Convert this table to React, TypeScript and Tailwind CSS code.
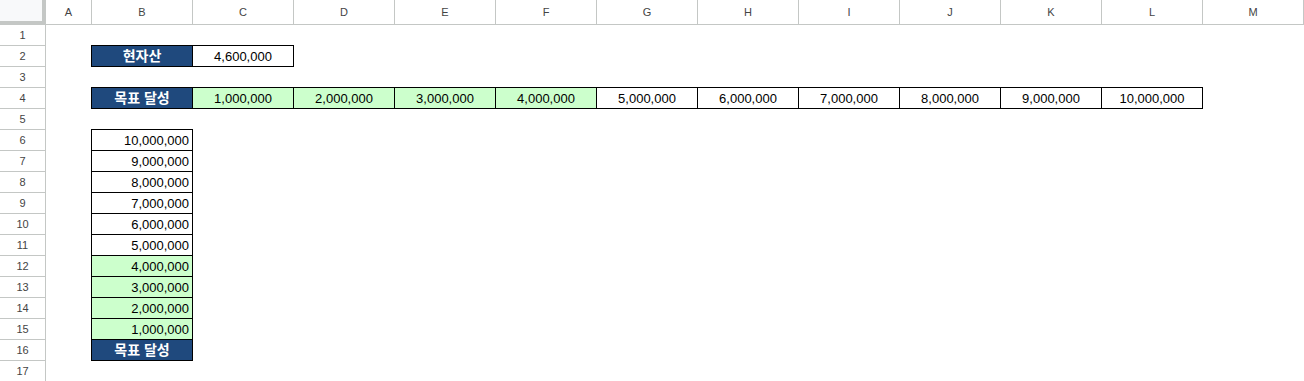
import React from 'react';

type Kind = 'dark' | 'green' | 'white';
type Cell = { text: string; kind: Kind; align: 'center' | 'right' };

const COLS = ['A', 'B', 'C', 'D', 'E', 'F', 'G', 'H', 'I', 'J', 'K', 'L', 'M'];
const ROWS = 17;

const fmt = (n: number) => n.toLocaleString('en-US');

// cell map keyed "row:col" (col 0 = A)
const cells: Record<string, Cell> = {};
const put = (r: number, c: number, cell: Cell) => {
  cells[`${r}:${c}`] = cell;
};

put(2, 1, { text: '현자산', kind: 'dark', align: 'center' });
put(2, 2, { text: '4,600,000', kind: 'white', align: 'center' });

put(4, 1, { text: '목표 달성', kind: 'dark', align: 'center' });
for (let i = 1; i <= 10; i++) {
  put(4, i + 1, { text: fmt(i * 1000000), kind: i <= 4 ? 'green' : 'white', align: 'center' });
}

for (let i = 0; i < 10; i++) {
  const v = 10 - i;
  put(6 + i, 1, { text: fmt(v * 1000000), kind: v <= 4 ? 'green' : 'white', align: 'right' });
}
put(16, 1, { text: '목표 달성', kind: 'dark', align: 'center' });

function DataCell({ r, c }: { r: number; c: number }) {
  const cell = cells[`${r}:${c}`];
  if (!cell) return <div />;
  const hasLeft = !!cells[`${r}:${c - 1}`];
  const hasTop = !!cells[`${r - 1}:${c}`];
  return (
    <div
      className={[
        'flex items-center border-r border-b border-black leading-none',
        hasLeft ? '' : '-ml-px border-l',
        hasTop ? '' : '-mt-px border-t',
        cell.align === 'right' ? 'justify-end pr-[3px]' : 'justify-center',
        cell.kind === 'dark'
          ? 'bg-[#1f497d] text-white font-bold text-[14px]'
          : cell.kind === 'green'
          ? 'bg-[#ccffcc] text-black text-[13px]'
          : 'bg-white text-black text-[13px]',
      ].join(' ')}
      style={{
        fontFamily:
          cell.kind === 'dark'
            ? '"Liberation Sans", "Noto Sans CJK KR", sans-serif'
            : '"Liberation Sans", Arial, sans-serif',
      }}
    >
      {cell.text}
    </div>
  );
}

export default function App() {
  const rows = Array.from({ length: ROWS }, (_, i) => i + 1);

  return (
    <div
      className="grid grid-cols-[46px_46px_repeat(12,101px)] grid-rows-[25px_repeat(17,21px)] w-[1304px] h-[381px] overflow-hidden bg-white"
      style={{ fontFamily: '"Liberation Sans", Arial, sans-serif' }}
    >
      {/* Corner */}
      <div className="bg-[#f8f9fa] border-r-4 border-b-4 border-[#c4c7c5]" />

      {/* Column headers */}
      {COLS.map((c) => (
        <div
          key={c}
          className="flex items-center justify-center border-r border-b border-[#c4c7c5] text-[11px] text-[#444]"
        >
          {c}
        </div>
      ))}

      {/* Rows */}
      {rows.map((r) => (
        <React.Fragment key={r}>
          <div className="flex items-center justify-center border-r border-b border-[#c4c7c5] text-[11px] text-[#444]">
            {r}
          </div>
          {COLS.map((_, c) => (
            <DataCell key={c} r={r} c={c} />
          ))}
        </React.Fragment>
      ))}
    </div>
  );
}
